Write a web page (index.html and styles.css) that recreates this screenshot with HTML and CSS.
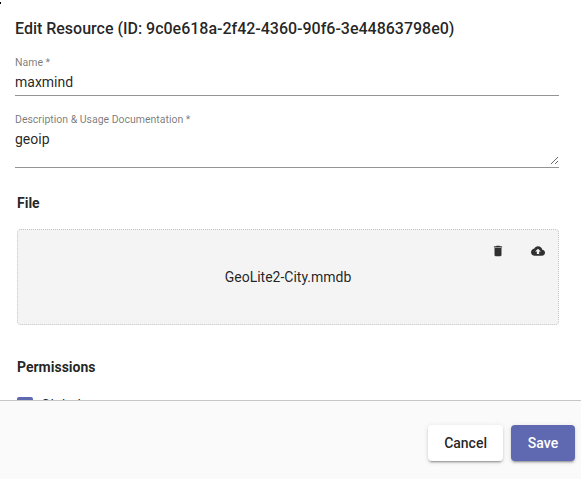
FILE: index.html
```html
<!DOCTYPE html>
<html lang="en">
<head>
<meta charset="utf-8">
<title>Edit Resource</title>
<link rel="stylesheet" href="styles.css">
</head>
<body>
<div class="dialog">
  <span class="corner-mark"></span>
  <main class="content">
    <h1 class="title">Edit Resource (ID: 9c0e618a-2f42-4360-90f6-3e44863798e0)</h1>
    <div class="field">
      <label class="label" for="name">Name *</label>
      <input class="control" id="name" type="text" value="maxmind">
    </div>
    <div class="field field-area">
      <label class="label" for="description">Description &amp; Usage Documentation *</label>
      <textarea class="control area" id="description">geoip</textarea>
    </div>
    <h2 class="heading">File</h2>
    <div class="dropzone">
      <div class="actions">
        <svg class="icon" viewBox="0 0 24 24"><path d="M6 19c0 1.100.9 2 2 2h8c1.100 0 2-.9 2-2V7H6v12zM19 4h-3.500l-1-1h-5l-1 1H5v2h14V4z"/></svg>
        <svg class="icon" viewBox="0 0 24 24"><path d="M19.350 10.040C18.670 6.590 15.640 4 12 4 9.110 4 6.600 5.640 5.350 8.040 2.340 8.360 0 10.910 0 14c0 3.310 2.690 6 6 6h13c2.760 0 5-2.240 5-5 0-2.640-2.050-4.780-4.650-4.960zM14 13v4h-4v-4H7l5-5 5 5h-3z"/></svg>
      </div>
      <div class="filename">GeoLite2-City.mmdb</div>
    </div>
    <h2 class="heading permissions">Permissions</h2>
    <div class="option"><span class="checkbox"></span><span>Global</span></div>
  </main>
  <footer class="footer">
    <button class="button" type="button">Cancel</button>
    <button class="button primary" type="button">Save</button>
  </footer>
</div>
</body>
</html>
```
FILE: styles.css
```css
* { box-sizing: border-box; }
body {
  margin: 0;
  background: #fff;
  color: rgba(0, 0, 0, .87);
  font: 14px/20px Roboto, sans-serif;
}
.dialog {
  position: relative;
  display: flex;
  flex-direction: column;
  height: 479px;
  overflow: hidden;
}
.corner-mark {
  position: absolute;
  top: 2px;
  left: 0;
  width: 1px;
  height: 2px;
  background: #000;
}
.content {
  height: 400px;
  padding: 19px 22px 0 15px;
  overflow: hidden;
}
.title {
  margin: 0;
  font-size: 16px;
  font-weight: 500;
  line-height: 20px;
  letter-spacing: -.01px;
}
.field {
  display: flex;
  flex-direction: column;
  height: 40px;
  margin-top: 17px;
  border-bottom: 1px solid #949494;
}
.field-area {
  height: 55px;
}
.label {
  height: 13px;
  color: rgba(0, 0, 0, .54);
  font-size: 10.5px;
  line-height: 13px;
  letter-spacing: -.01px;
}
.control {
  width: 100%;
  height: 20px;
  margin: 3px 0 0;
  padding: 0;
  border: 0;
  outline: 0;
  background: transparent;
  color: inherit;
  font: inherit;
}
.area {
  height: 36px;
  overflow: auto;
  resize: vertical;
}
.heading {
  margin: 25px 0 0 2px;
  font-size: 14px;
  font-weight: 700;
  line-height: 20px;
}
.dropzone {
  height: 96px;
  margin: 16px 0 0 2px;
  border: 1px dotted #c4c4c4;
  border-radius: 4px;
  background: #f4f4f4;
}
.actions {
  display: flex;
  justify-content: flex-end;
  gap: 26px;
  padding: 14px 13px 0 0;
}
.icon {
  display: block;
  width: 14px;
  height: 14px;
  fill: #303030;
}
.filename {
  margin-top: 9px;
  text-align: center;
}
.permissions { margin-top: 32px; }
.option {
  display: flex;
  gap: 8px;
  align-items: center;
  height: 20px;
  margin: 18px 0 0 2px;
}
.checkbox {
  width: 16px;
  height: 16px;
  border-radius: 2px;
  background: #5f69b1;
}
.footer {
  display: flex;
  justify-content: flex-end;
  gap: 8px;
  height: 79px;
  padding: 24px 6px 0;
  border-top: 1px solid #c6c6c6;
  background: #fafafa;
}
.button {
  min-width: 64px;
  height: 36px;
  padding: 0 16px;
  border: 0;
  border-radius: 4px;
  background: #fff;
  color: rgba(0, 0, 0, .87);
  font: 500 14px/36px Roboto, sans-serif;
  box-shadow: 0 3px 1px -2px rgba(0, 0, 0, .2), 0 2px 2px 0 rgba(0, 0, 0, .14), 0 1px 5px 0 rgba(0, 0, 0, .12);
}
.primary {
  background: #5f69b1;
  color: #fff;
}
```
